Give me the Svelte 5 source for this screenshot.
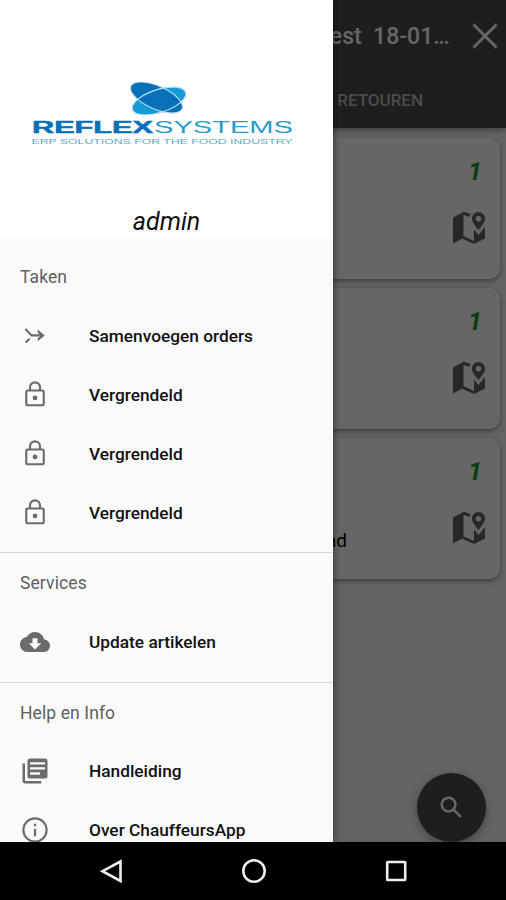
<script lang="ts">
	type Item = { icon: string; label: string };

	const sections: { title: string; items: Item[] }[] = [
		{
			title: 'Taken',
			items: [
				{ icon: 'merge', label: 'Samenvoegen orders' },
				{ icon: 'lock', label: 'Vergrendeld' },
				{ icon: 'lock', label: 'Vergrendeld' },
				{ icon: 'lock', label: 'Vergrendeld' }
			]
		},
		{
			title: 'Services',
			items: [{ icon: 'cloud', label: 'Update artikelen' }]
		},
		{
			title: 'Help en Info',
			items: [
				{ icon: 'books', label: 'Handleiding' },
				{ icon: 'info', label: 'Over ChauffeursApp' }
			]
		}
	];

	const orders = [
		{ count: 1, note: '' },
		{ count: 1, note: '' },
		{ count: 1, note: 'Zuidland' }
	];
</script>

<div class="phone">
	<div class="screen">
		<header class="toolbar">
			<div class="title-row">
				<span class="title">Test&nbsp; 18-01…</span>
				<svg class="close" viewBox="0 0 26 26">
					<path d="M1.5 1.5 24.5 24.5M24.5 1.5 1.5 24.5" />
				</svg>
			</div>
			<div class="tab">RETOUREN</div>
		</header>

		<main class="orders">
			{#each orders as order}
				<article class="card">
					<span class="note">{order.note}</span>
					<div class="card-side">
						<span class="count">{order.count}</span>
						<svg class="map" viewBox="0 0 34 34">
							<path d="M1 6.5 11.5 1V27L1 32.5Z" />
							<path class="fold" d="M11 2 18 4.5M11 26.5 22 31.5" />
							<path d="M22 18.5 26.5 24 33 16V27.5L22 33Z" />
							<path
								fill-rule="evenodd"
								d="M26.5 1A6.6 6.6 0 0 0 19.9 7.6C19.9 12 26.5 19 26.5 19S33.1 12 33.1 7.6A6.6 6.6 0 0 0 26.5 1ZM26.5 5A2.7 2.7 0 1 1 26.5 10.4A2.7 2.7 0 1 1 26.5 5Z"
							/>
						</svg>
					</div>
				</article>
			{/each}
		</main>

		<button class="fab" aria-label="Zoeken">
			<svg viewBox="0 0 24 24">
				<circle cx="9.2" cy="9.2" r="6.6" />
				<path d="m14 14 7 7" />
			</svg>
		</button>

		<div class="scrim"></div>

		<aside class="drawer">
			<div class="account">
				<svg class="logo" viewBox="0 0 264 66">
					<ellipse class="light" cx="128" cy="20" rx="28" ry="11.5" transform="rotate(-18 128 20)" />
					<ellipse class="dark" cx="125.5" cy="16.5" rx="28" ry="11.5" transform="rotate(24 125.5 16.5)" />
					<ellipse class="ring" cx="128" cy="20" rx="28" ry="11.5" transform="rotate(-18 128 20)" />
					<text class="brand bold" x="1" y="52" textLength="121" lengthAdjust="spacingAndGlyphs">REFLEX</text>
					<text class="brand" x="123" y="52" textLength="139" lengthAdjust="spacingAndGlyphs">SYSTEMS</text>
					<text class="tagline" x="0.5" y="63" textLength="261" lengthAdjust="spacingAndGlyphs">ERP SOLUTIONS FOR THE FOOD INDUSTRY</text>
				</svg>
				<span class="user">admin</span>
			</div>

			{#each sections as section}
				<section>
					<h2>{section.title}</h2>
					{#each section.items as item}
						<div class="item">
							<svg class="icon" viewBox="0 0 24 24">
								{#if item.icon === 'merge'}
									<path class="line" d="M4.3 6.3 9.2 11.5H17" />
									<path d="M14.2 6.8 19.8 11.5 14.2 16.2V13.7L16.8 11.5 14.2 9.3Z" />
									<path class="line" d="M4.5 17.2 7.7 14.2" />
								{:else if item.icon === 'lock'}
									<rect class="line" x="5" y="8.4" width="14" height="11.8" rx="1.2" />
									<path class="line" d="M8 8.4V5.9a4 4 0 0 1 8 0V8.4" />
									<circle cx="12" cy="14.3" r="1.9" />
								{:else if item.icon === 'cloud'}
									<path d="M19.35 10.04C18.67 6.59 15.64 4 12 4 9.11 4 6.6 5.64 5.35 8.04 2.34 8.36 0 10.91 0 14c0 3.31 2.69 6 6 6h13c2.76 0 5-2.24 5-5 0-2.64-2.05-4.78-4.65-4.96zM17 13l-5 5-5-5h3V9h4v4h3z" />
								{:else if item.icon === 'books'}
									<path d="M4 6H2v14c0 1.1.9 2 2 2h13v-2H4V6z" />
									<path fill-rule="evenodd" d="M8 2h12a2 2 0 0 1 2 2v12a2 2 0 0 1-2 2H8a2 2 0 0 1-2-2V4a2 2 0 0 1 2-2zM8 5v1.8h12V5zM8 9v1.8h12V9zM8 13v2h8v-2z" />
								{:else}
									<circle class="line" cx="12" cy="12" r="9.3" />
									<path d="M11.1 7h1.8v2h-1.8zM11.1 11h1.8v6h-1.8z" />
								{/if}
							</svg>
							<span>{item.label}</span>
						</div>
					{/each}
				</section>
			{/each}
		</aside>
	</div>

	<nav class="navbar">
		<svg viewBox="0 0 26 26"><path d="M21.5 3.5V23L3.5 13.2Z" /></svg>
		<svg viewBox="0 0 26 26"><circle cx="13" cy="13" r="10.7" /></svg>
		<svg viewBox="0 0 26 26"><rect x="4.2" y="4" width="18" height="18" rx="0.5" /></svg>
	</nav>
</div>

<style>
	:global(body) {
		margin: 0;
	}

	.phone {
		display: flex;
		flex-direction: column;
		width: 506px;
		height: 900px;
		overflow: hidden;
		background: #000;
		font-family: Roboto, sans-serif;
	}

	.screen {
		position: relative;
		height: 842px;
		overflow: hidden;
		background: #f7f7f7;
	}

	.toolbar {
		height: 128px;
		background: #4b4b4b;
		box-shadow: 0 2px 6px rgba(0, 0, 0, 0.4);
		color: #fff;
	}

	.title-row {
		display: flex;
		align-items: center;
		justify-content: flex-end;
		gap: 22px;
		height: 72px;
		padding-right: 8.5px;
	}

	.title {
		font-size: 23px;
		font-weight: 500;
	}

	.close {
		width: 26px;
		height: 26px;
		fill: none;
		stroke: #fff;
		stroke-width: 3;
	}

	.tab {
		padding: 17px 83px 0 0;
		color: #bbb;
		font-size: 17px;
		font-weight: 500;
		line-height: 22px;
		text-align: right;
	}

	.orders {
		display: flex;
		flex-direction: column;
		gap: 9px;
		padding: 10px 6px 0;
	}

	.card {
		display: flex;
		justify-content: flex-end;
		height: 141px;
		border-radius: 11px;
		background: #fff;
		box-shadow: 0 2px 5px rgba(0, 0, 0, 0.4);
	}

	.note {
		align-self: flex-end;
		margin: 0 105px 26px 0;
		font-size: 19px;
		line-height: 24px;
	}

	.card-side {
		display: flex;
		flex-direction: column;
		align-items: flex-end;
		width: 34px;
		margin-right: 14px;
	}

	.count {
		margin: 20px 4px 0 0;
		color: #10a020;
		font-size: 25px;
		font-style: italic;
		font-weight: 700;
		line-height: 28px;
	}

	.map {
		width: 34px;
		height: 34px;
		margin-top: 25px;
		fill: #626262;
	}

	.fold {
		fill: none;
		stroke: #626262;
		stroke-width: 3;
	}

	.fab {
		position: absolute;
		right: 20px;
		bottom: 0;
		display: flex;
		align-items: center;
		justify-content: center;
		width: 69px;
		height: 69px;
		padding: 0;
		border: 0;
		border-radius: 50%;
		background: #4b4b4b;
		box-shadow: 0 3px 8px rgba(0, 0, 0, 0.35);
	}

	.fab svg {
		width: 25px;
		height: 25px;
		fill: none;
		stroke: #fff;
		stroke-width: 2.4;
	}

	.scrim {
		position: absolute;
		inset: 0;
		background: rgba(0, 0, 0, 0.6);
	}

	.drawer {
		position: absolute;
		top: 0;
		left: 0;
		width: 333px;
		height: 100%;
		overflow: hidden;
		background: #fafafa;
		box-shadow: 0 0 8px rgba(0, 0, 0, 0.55);
	}

	.account {
		display: flex;
		flex-direction: column;
		align-items: center;
		height: 238px;
		margin-bottom: 9px;
		background: #fff;
	}

	.logo {
		width: 264px;
		height: 66px;
		margin: 81px 8px 0 0;
	}

	.light {
		fill: #169bd7;
	}

	.dark {
		fill: #0870b8;
		stroke: #b9e0f2;
		stroke-width: 1;
	}

	.ring {
		fill: none;
		stroke: #b9e0f2;
		stroke-width: 1.2;
	}

	.brand {
		fill: #2b9cc6;
		font-family: 'Liberation Sans', sans-serif;
		font-size: 16px;
	}

	.bold {
		fill: #0870b8;
		stroke: #0870b8;
		stroke-width: 0.5;
		font-weight: 700;
	}

	.tagline {
		fill: #5fa9c4;
		font-family: 'Liberation Sans', sans-serif;
		font-size: 7.4px;
	}

	.user {
		margin-top: 60px;
		color: #111;
		font-size: 25px;
		font-style: italic;
		line-height: 30px;
	}

	section {
		padding-bottom: 10.4px;
	}

	section + section {
		border-top: 1px solid #d6d6d6;
	}

	h2 {
		margin: 0 0 -1px;
		padding: 1px 0 0 20px;
		color: #606060;
		font-size: 17.5px;
		font-weight: 400;
		letter-spacing: 0.1px;
		line-height: 59px;
	}

	.item {
		display: flex;
		align-items: center;
		gap: 39px;
		height: 59px;
		padding-left: 20px;
		color: #111;
		font-size: 17.3px;
		font-weight: 500;
	}

	.icon {
		width: 30px;
		height: 30px;
		fill: #6b6b6b;
	}

	.line {
		fill: none;
		stroke: #6b6b6b;
		stroke-width: 1.7;
	}

	.navbar {
		display: flex;
		align-items: center;
		justify-content: center;
		gap: 116px;
		height: 58px;
		padding-left: 2px;
	}

	.navbar svg {
		width: 26px;
		height: 26px;
		fill: none;
		stroke: #eee;
		stroke-width: 2.6;
	}
</style>
